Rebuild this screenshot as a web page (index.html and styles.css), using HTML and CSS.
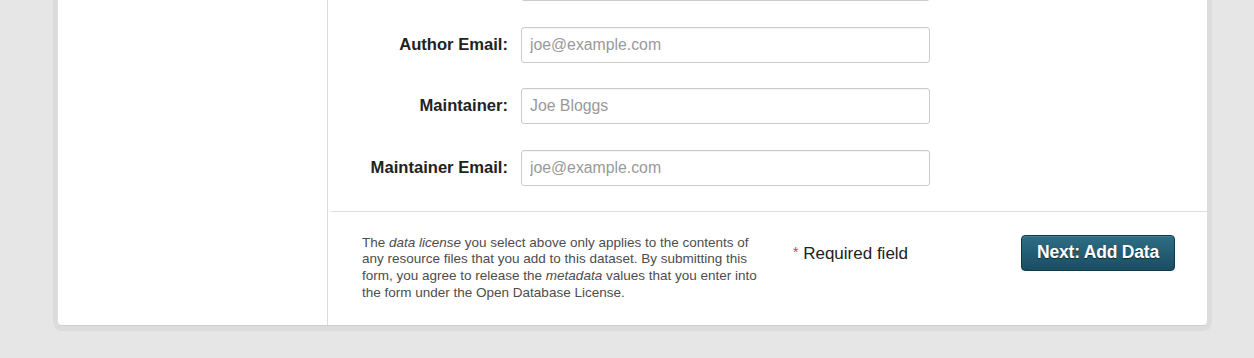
FILE: index.html
```html
<!DOCTYPE html>
<html lang="en">
  <head>
    <meta charset="UTF-8" />
    <meta name="viewport" content="width=device-width, initial-scale=1.0" />
    <title>Add dataset</title>
    <link rel="stylesheet" href="styles.css">
  </head>
  <body>
    <section class="wrapper">
      <aside class="sidebar"></aside>
      <div class="main">
        <form action="#" class="fields">
          <div class="field">
            <label for="author"></label>
            <input type="text" id="author" />
          </div>
          <div class="field">
            <label for="author-email">Author Email:</label>
            <input type="text" id="author-email" placeholder="joe@example.com" />
          </div>
          <div class="field">
            <label for="maintainer">Maintainer:</label>
            <input type="text" id="maintainer" placeholder="Joe Bloggs" />
          </div>
          <div class="field">
            <label for="maintainer-email">Maintainer Email:</label>
            <input type="text" id="maintainer-email" placeholder="joe@example.com" />
          </div>
        </form>
        <div class="actions">
          <p class="info">The <em>data license</em> you select above only applies to the contents of any resource files that you add to this dataset. By submitting this form, you agree to release the <em>metadata</em> values that you enter into the form under the <a href="#">Open Database License</a>.</p>
          <p class="required"><span class="star">*</span> Required field</p>
          <button class="btn" type="submit">Next: Add Data</button>
        </div>
      </div>
    </section>
  </body>
</html>
```

FILE: styles.css
```css
* {
  margin: 0px;
  padding: 0px;
  box-sizing: border-box;
}
body {
  height: 100vh;
  overflow: hidden;
  background-color: #e6e6e6;
  font-family: "Liberation Sans", Arial, sans-serif;
  color: #333;
}
.wrapper {
  display: flex;
  width: 1149px;
  margin: -55px 0 0 58px;
  background-color: white;
  border-bottom: 1px solid #cfcfcf;
  border-radius: 4px;
  box-shadow: 0 0 0 5px rgba(0, 0, 0, 0.045);
}
.sidebar {
  width: 270px;
  border-right: 1px solid #dcdcdc;
}
.main {
  flex: 1;
}
.fields {
  display: flex;
  flex-direction: column;
  gap: 25.5px;
  padding: 20px 0 25px 0;
}
.field {
  display: flex;
  align-items: center;
  height: 36px;
}
.field label {
  width: 180px;
  text-align: right;
  font-weight: bold;
  font-size: 16.6px;
  color: #222;
  margin-right: 13px;
}
.field input {
  width: 409px;
  height: 36px;
  border: 1px solid #cbcbcb;
  border-radius: 3px;
  padding-left: 8px;
  font-family: inherit;
  font-size: 15.8px;
  color: #333;
  box-shadow: inset 0 1px 1px rgba(0, 0, 0, 0.04);
}
.field input::placeholder {
  color: #999;
}
.field input:focus {
  outline: 0;
}
.actions {
  display: flex;
  align-items: flex-start;
  margin-left: 3px;
  border-top: 1px solid #dedede;
  padding: 23px 32px 23px 31px;
}
.info {
  width: 410px;
  font-size: 13.5px;
  line-height: 16.8px;
  color: #4d4d4d;
}
.info a {
  color: #4d4d4d;
  text-decoration: none;
}
.required {
  margin-left: 21px;
  line-height: 35px;
  font-size: 17px;
  color: #222;
}
.star {
  color: #c9424e;
  font-size: 14px;
  vertical-align: 2px;
}
.btn {
  margin-left: auto;
  width: 154px;
  height: 36px;
  border: 1px solid #0f3a4b;
  border-radius: 4px;
  background: linear-gradient(#2d6e85, #1a4d61);
  color: white;
  font-family: inherit;
  font-weight: bold;
  font-size: 17.5px;
  letter-spacing: -0.2px;
  text-shadow: 0 1px 1px rgba(0, 0, 0, 0.55);
  box-shadow: inset 0 1px 0 rgba(255, 255, 255, 0.12);
}
```
